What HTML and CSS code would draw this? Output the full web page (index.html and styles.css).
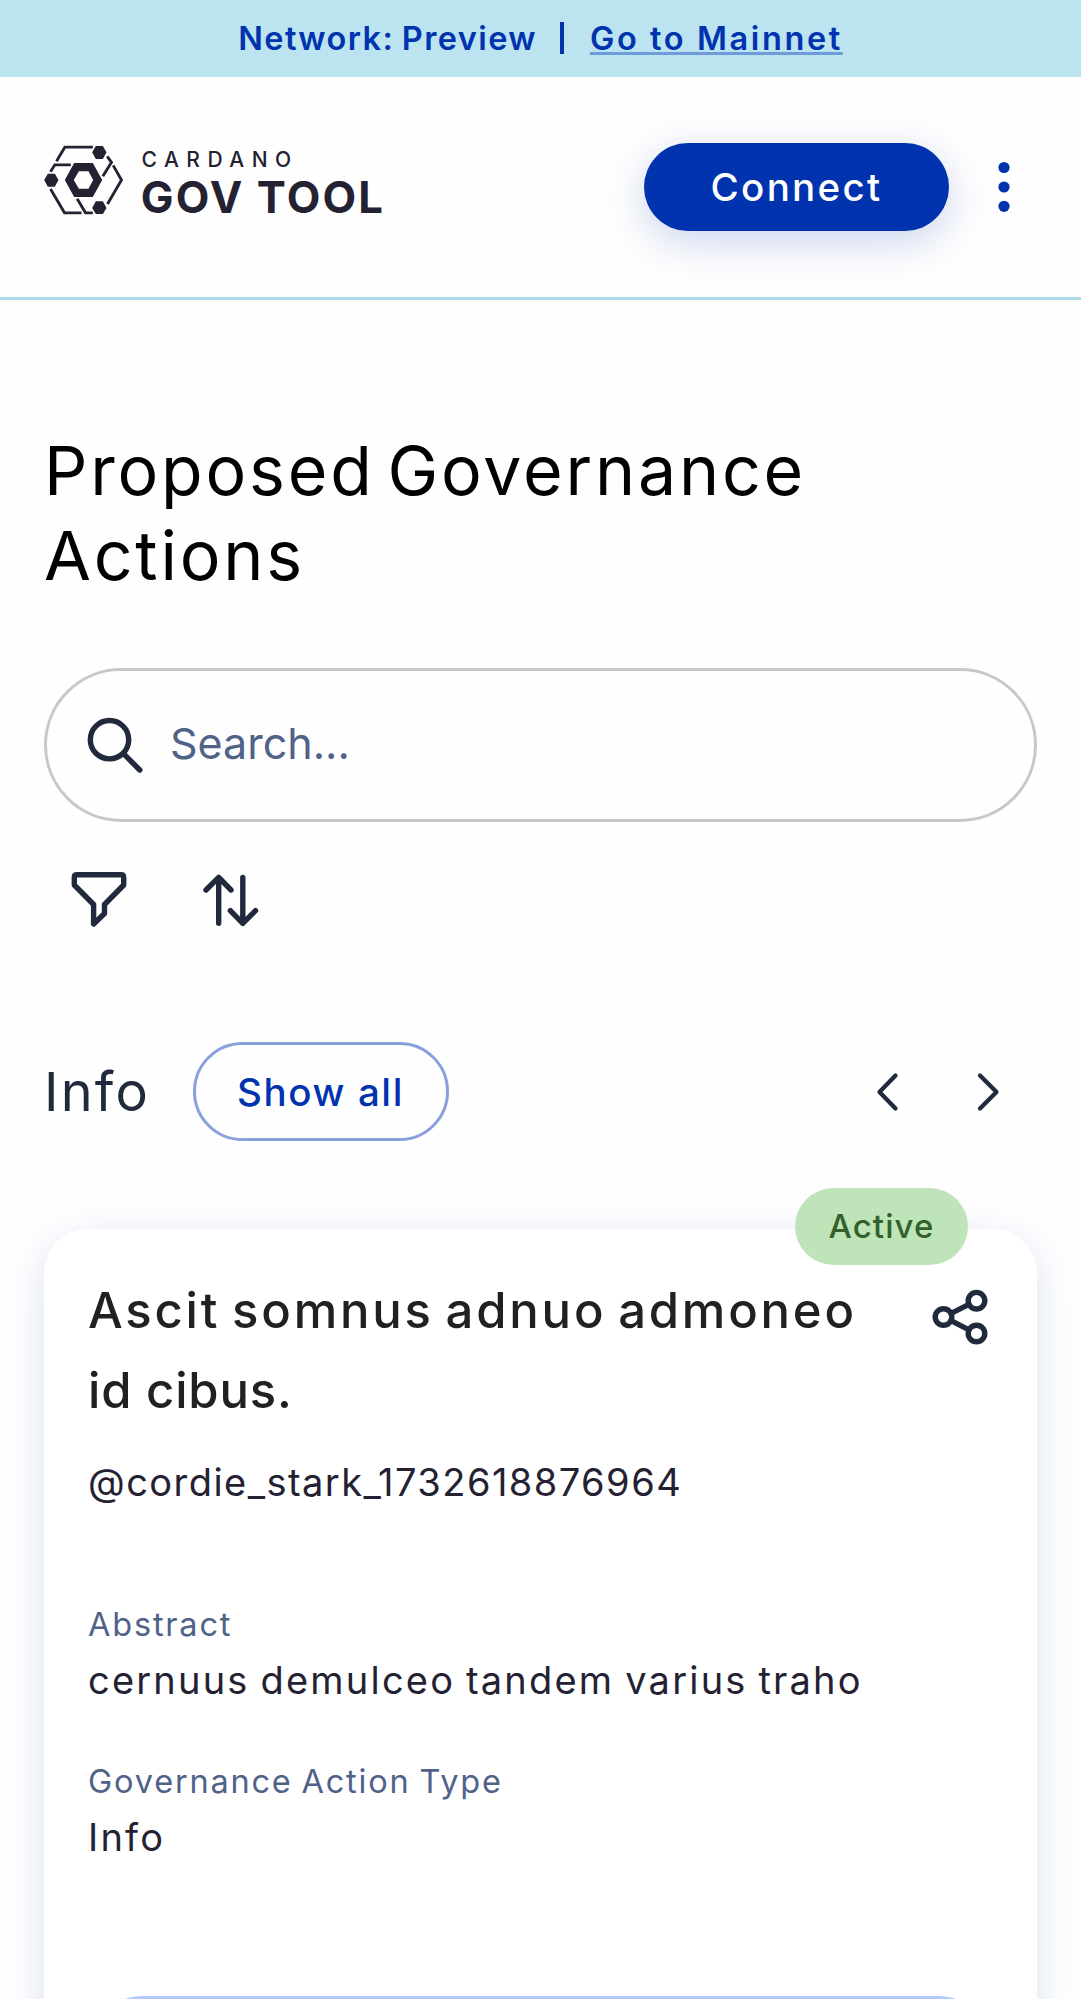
FILE: index.html
```html
<!DOCTYPE html>
<html lang="en">
<head>
<meta charset="utf-8">
<title>Cardano GovTool</title>
<link rel="stylesheet" href="styles.css">
</head>
<body>
<div class="page">
  <div class="banner">
    <span class="banner-network">Network: Preview</span>
    <span class="banner-divider"></span>
    <a class="banner-link" href="#">Go to Mainnet</a>
  </div>
  <header class="header">
    <svg class="logo" viewBox="42 48 1016 204" role="img" aria-label="Cardano GovTool">
      <g fill="none" stroke="#242232" stroke-width="8.5">
        <path d="M79 94L104 51.500H188M61 125L74 104.500H122M231 79L244 97L218 139M249 106L274 150L232 222M61 177L103 248.500H154M141 206L166 248.500H188"/>
      </g>
      <g fill="#242232">
        <path fill-rule="evenodd" d="M104 150L132 99H188L216 150L188 201H132ZM131 150L146 176H175L189 150L175 124H146Z"/>
        <path d="M186 67L197 48H218L229 67L218 87H197ZM42 150L53 131H74L85 150L74 170H53ZM186 234L197 214H218L229 234L218 252H197Z"/>
        <text class="logo-small" x="334" y="111" textLength="449">CARDANO</text>
        <text class="logo-big" x="332" y="250" textLength="726">GOV TOOL</text>
      </g>
    </svg>
    <div class="header-actions">
      <button class="btn-primary">Connect</button>
      <svg class="icon" viewBox="0 0 66 66"><circle cx="33" cy="13.500" r="5.600"/><circle cx="33" cy="33" r="5.600"/><circle cx="33" cy="52.300" r="5.600"/></svg>
    </div>
  </header>
  <main class="main">
    <h1 class="title">Proposed Governance Actions</h1>
    <div class="search">
      <svg class="icon" viewBox="0 0 66 66"><circle cx="27.500" cy="27.700" r="19.200"/><path d="M41.500 41.700L57.800 58"/></svg>
      <span class="search-text">Search...</span>
    </div>
    <div class="tools">
      <svg class="icon" viewBox="0 0 66 66"><path d="M11 8.800H55Q57.700 8.800 57.700 11.500V19L38.500 38.500V47.500L27.600 58V38.500L8.300 19V11.500Q8.300 8.800 11 8.800Z"/></svg>
      <svg class="icon" viewBox="0 0 66 66"><path d="M20.700 57.300V11.500M8 24L20.700 11.300L33 24M44.800 11.500V57.300M32.300 44.700L44.800 57.300L57.500 44.700"/></svg>
    </div>
    <div class="section-head">
      <h2 class="section-title">Info</h2>
      <button class="btn-outline">Show all</button>
      <div class="pager">
        <svg class="icon icon-thin" viewBox="0 0 66 66"><path d="M41.500 16.500L25.500 33L41.500 49.500"/></svg>
        <svg class="icon icon-thin" viewBox="0 0 66 66"><path d="M25 16.500L41.500 33L25 49.500"/></svg>
      </div>
    </div>
    <article class="card">
      <span class="chip">Active</span>
      <div class="card-head">
        <h3 class="card-title">Ascit somnus adnuo admoneo <span class="card-title-end">id cibus.</span></h3>
        <svg class="icon" viewBox="0 0 66 66"><circle cx="16.500" cy="33" r="8.300"/><circle cx="49.500" cy="16.700" r="8.300"/><circle cx="49.500" cy="49.500" r="8.300"/><path d="M24 29.300L42 20.400M24 36.700L42 45.800"/></svg>
      </div>
      <p class="author">@cordie_stark_1732618876964</p>
      <dl class="fields">
        <div class="field">
          <dt class="label">Abstract</dt>
          <dd class="value">cernuus demulceo tandem varius traho</dd>
        </div>
        <div class="field">
          <dt class="label">Governance Action Type</dt>
          <dd class="value">Info</dd>
        </div>
      </dl>
      <div class="details"></div>
    </article>
  </main>
</div>
</body>
</html>
```
FILE: styles.css
```css
* { box-sizing: border-box; }
body, h1, h2, h3, p, dl, dt, dd { margin: 0; font-weight: 400; }
body { background: #fff; color: #242232; font-family: Inter, "Liberation Sans", sans-serif; }
button { border: 0; padding: 0; font: inherit; }
.page { height: 1999px; overflow: hidden; background: #fefefe; }

.banner { display: flex; align-items: center; justify-content: center; height: 77px; background: #bce4f0; color: #0033ad; font-size: 32.5px; font-weight: 600; white-space: nowrap; }
.banner-network { letter-spacing: 1.4px; word-spacing: -2px; }
.banner-divider { width: 4px; height: 32px; margin: 0 26px 2px 23px; background: #0033ad; }
.banner-link { color: inherit; letter-spacing: 2.6px; text-decoration: underline #6f9bd8 2.5px; text-underline-offset: 2px; text-decoration-skip-ink: none; }

.header { display: flex; align-items: center; justify-content: space-between; height: 223px; padding: 0 44px; border-bottom: 3px solid #aed9e6; }
.logo { width: 339px; height: 68px; margin-bottom: 14px; overflow: visible; }
.logo-small { font-size: 63px; font-weight: 500; }
.logo-big { font-size: 131px; font-weight: 650; }
.header-actions { display: flex; align-items: center; gap: 22px; }
.btn-primary { width: 305px; height: 88px; border-radius: 44px; background: #0033ad; color: #fff; font-size: 38.5px; font-weight: 500; letter-spacing: 2.3px; box-shadow: 0 11px 41px rgba(0, 51, 173, .2); }

.icon { flex: none; display: block; width: 66px; height: 66px; fill: none; stroke: #212a3d; stroke-width: 5.4; stroke-linecap: round; stroke-linejoin: round; }
.header-actions .icon { fill: #0033ad; stroke: none; }
.icon-thin { stroke-width: 4.3; }

.main { padding: 128px 44px 0; }
.title { color: #000; font-size: 68px; line-height: 85px; letter-spacing: 2.8px; word-spacing: -9px; }
.search { display: flex; align-items: center; gap: 22px; height: 154px; margin-top: 70px; padding-left: 35px; border: 3px solid #c8c8c8; border-radius: 77px; }
.search-text { padding-bottom: 4px; color: #506288; font-size: 43px; letter-spacing: 0; }
.tools { display: flex; gap: 66px; margin-top: 44px; padding-left: 22px; }

.section-head { display: flex; align-items: center; height: 99px; margin-top: 110px; }
.section-title { width: 148.5px; color: #212a3d; font-size: 54px; letter-spacing: 2.2px; }
.btn-outline { width: 256px; height: 99px; border: 3px solid #88a0dc; border-radius: 50px; background: transparent; color: #0033ad; font-size: 38.5px; font-weight: 500; letter-spacing: 1.6px; }
.pager { display: flex; gap: 35px; margin-left: auto; padding-right: 16px; }

.card { position: relative; height: 900px; margin-top: 88px; padding: 42px 44px 0; border-radius: 44px; background: #fff; box-shadow: 0 11px 41px #dde3f5; }
.chip { position: absolute; top: -41px; right: 69px; width: 173px; height: 77px; border-radius: 38.5px; background: #c0e4ba; color: #33612a; font-size: 33px; font-weight: 500; line-height: 77px; letter-spacing: 1.1px; text-align: center; }
.card-head { display: flex; justify-content: space-between; }
.card-head .icon { margin-top: 13px; }
.card-title { width: 800px; color: #212121; font-size: 49px; font-weight: 500; line-height: 79.5px; letter-spacing: 2.8px; word-spacing: -4px; }
.card-title-end { letter-spacing: .8px; word-spacing: 0; }
.author { margin-top: 19px; font-size: 38px; line-height: 66px; letter-spacing: 1.45px; }
.fields { display: flex; flex-direction: column; gap: 46px; margin-top: 83.5px; }
.label { color: #506288; font-size: 32.5px; line-height: 52px; letter-spacing: 1.8px; word-spacing: -2px; }
.value { margin-top: -1px; font-size: 38px; line-height: 60px; letter-spacing: 2.2px; word-spacing: -2px; white-space: nowrap; }
.details { height: 110px; margin-top: 129px; border: 3px solid #b3c8ff; border-radius: 55px; }
```
